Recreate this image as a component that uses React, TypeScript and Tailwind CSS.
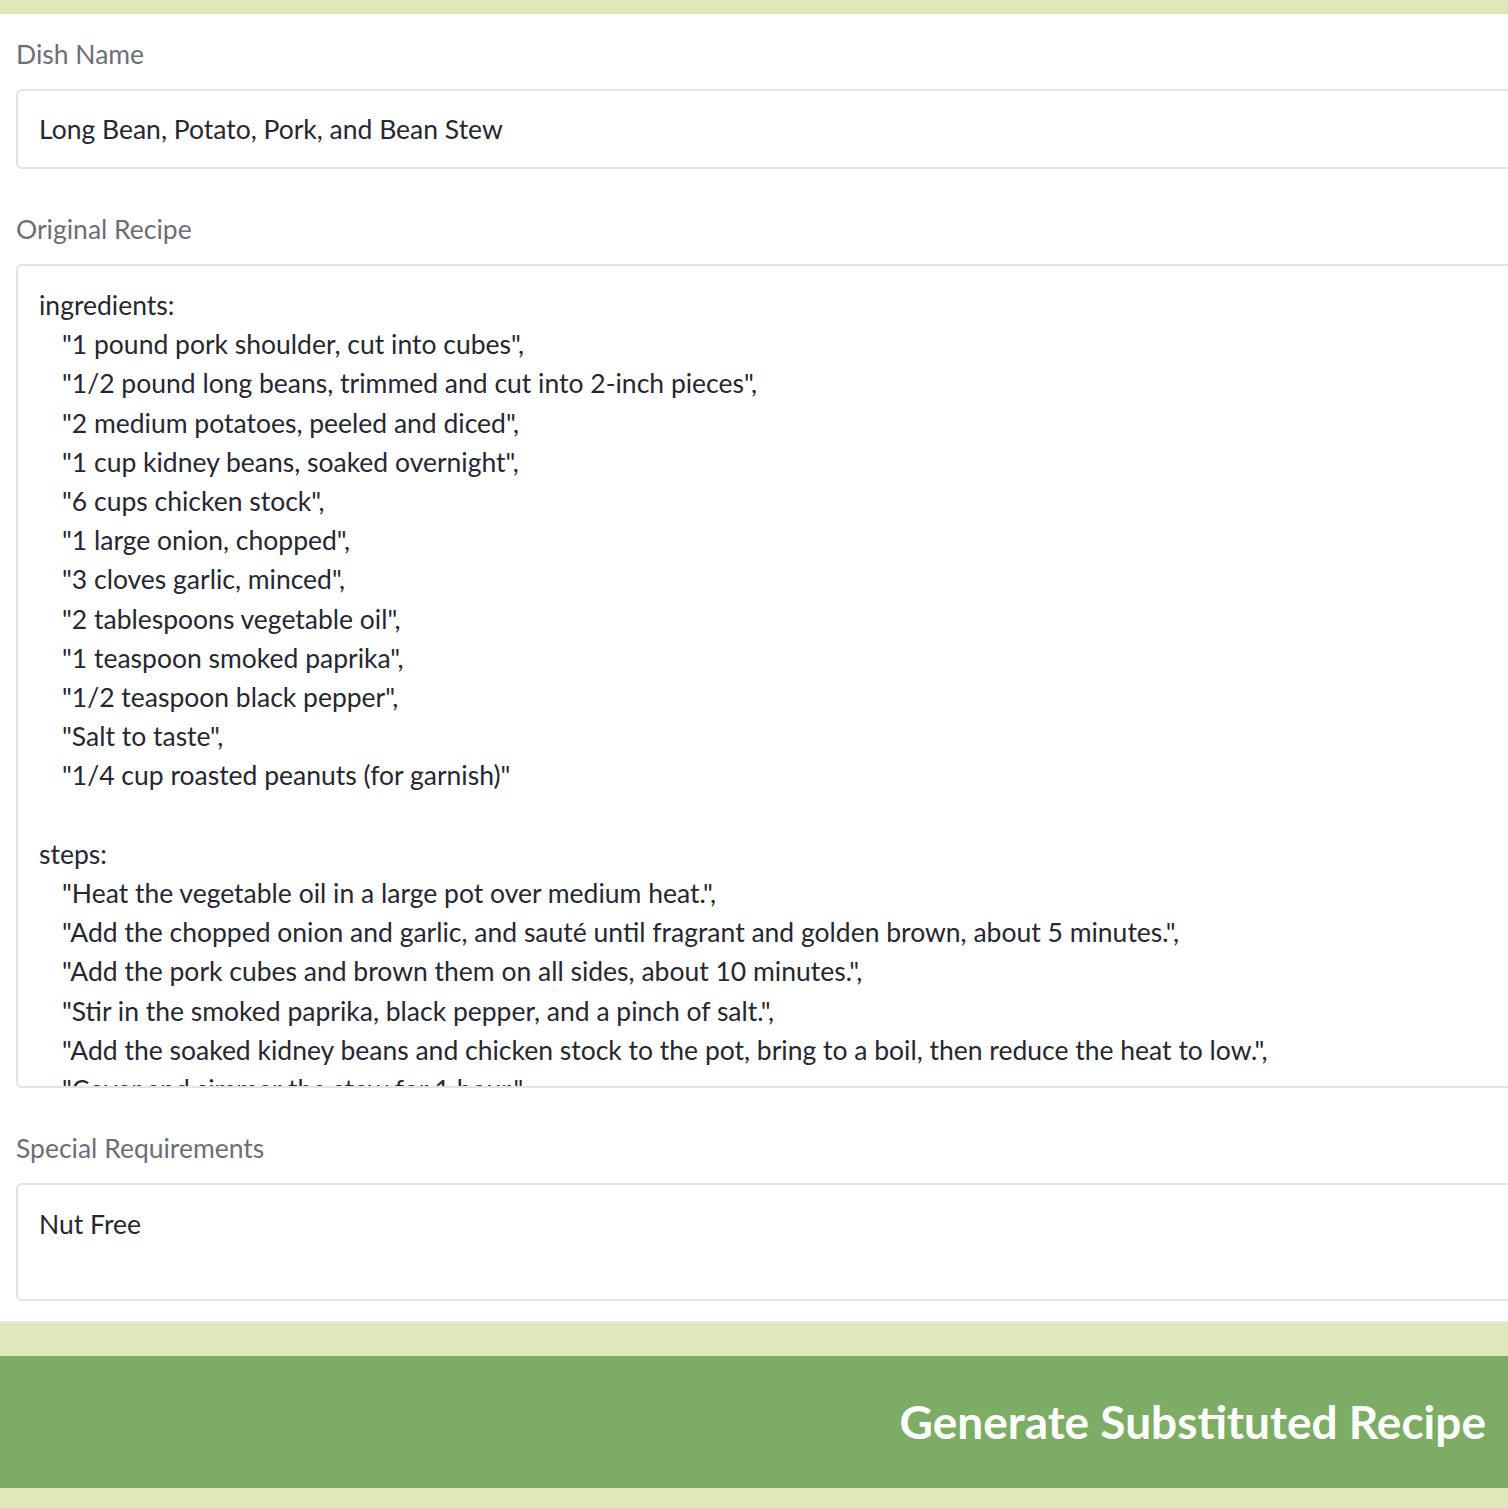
const ingredients = [
  '"1 pound pork shoulder, cut into cubes",',
  '"1/2 pound long beans, trimmed and cut into 2-inch pieces",',
  '"2 medium potatoes, peeled and diced",',
  '"1 cup kidney beans, soaked overnight",',
  '"6 cups chicken stock",',
  '"1 large onion, chopped",',
  '"3 cloves garlic, minced",',
  '"2 tablespoons vegetable oil",',
  '"1 teaspoon smoked paprika",',
  '"1/2 teaspoon black pepper",',
  '"Salt to taste",',
  '"1/4 cup roasted peanuts (for garnish)"',
];

const steps = [
  '"Heat the vegetable oil in a large pot over medium heat.",',
  '"Add the chopped onion and garlic, and sauté until fragrant and golden brown, about 5 minutes.",',
  '"Add the pork cubes and brown them on all sides, about 10 minutes.",',
  '"Stir in the smoked paprika, black pepper, and a pinch of salt.",',
  '"Add the soaked kidney beans and chicken stock to the pot, bring to a boil, then reduce the heat to low.",',
  '"Cover and simmer the stew for 1 hour.",',
  '"Add the potatoes and long beans, and continue to simmer for another 30 minutes.",',
];

const Label = ({ text }: { text: string }) => (
  <p className="text-[26.5px] leading-[39px] text-[#6d6e75]">{text}</p>
);

export default function App() {
  return (
    <div
      className="w-[1508px] h-[1508px] overflow-hidden bg-[#dfe7bb] text-[#262730]"
      style={{ fontFamily: 'Lato, "Noto Sans", sans-serif' }}
    >
      <div className="h-[14px]" />
      <div className="bg-white border-b-2 border-[#e6e6e6] pl-4 pt-[21px] pb-[20px] flex flex-col">
        <Label text="Dish Name" />
        <div className="mt-[15px] w-[1540px] h-[80px] border-2 border-[#e3e3e3] rounded-md px-[21px] flex items-center text-[26.5px] leading-[39px]">
          Long Bean, Potato, Pork, and Bean Stew
        </div>

        <div className="mt-[41px]">
          <Label text="Original Recipe" />
        </div>
        <div className="mt-[15px] w-[1540px] h-[824px] overflow-hidden border-2 border-[#e3e3e3] rounded-md px-[21px] pt-[20px] text-[26.5px] leading-[39.2px]">
          <div>ingredients:</div>
          {ingredients.map((l) => (
            <div key={l} className="pl-[23px] whitespace-nowrap">
              {l}
            </div>
          ))}
          <div>&nbsp;</div>
          <div>steps:</div>
          {steps.map((l) => (
            <div key={l} className="pl-[23px] whitespace-nowrap">
              {l}
            </div>
          ))}
        </div>

        <div className="mt-[41px]">
          <Label text="Special Requirements" />
        </div>
        <div className="mt-[15px] w-[1540px] h-[118px] border-2 border-[#e3e3e3] rounded-md px-[21px] pt-[20px] text-[26.5px] leading-[39px]">
          Nut Free
        </div>
      </div>

      <div className="h-[33px]" />
      <div className="h-[132px] bg-[#7dad64] flex items-center justify-end pr-[22px]">
        <span className="text-white font-bold text-[46px] leading-none">
          Generate Substituted Recipe
        </span>
      </div>
    </div>
  );
}
